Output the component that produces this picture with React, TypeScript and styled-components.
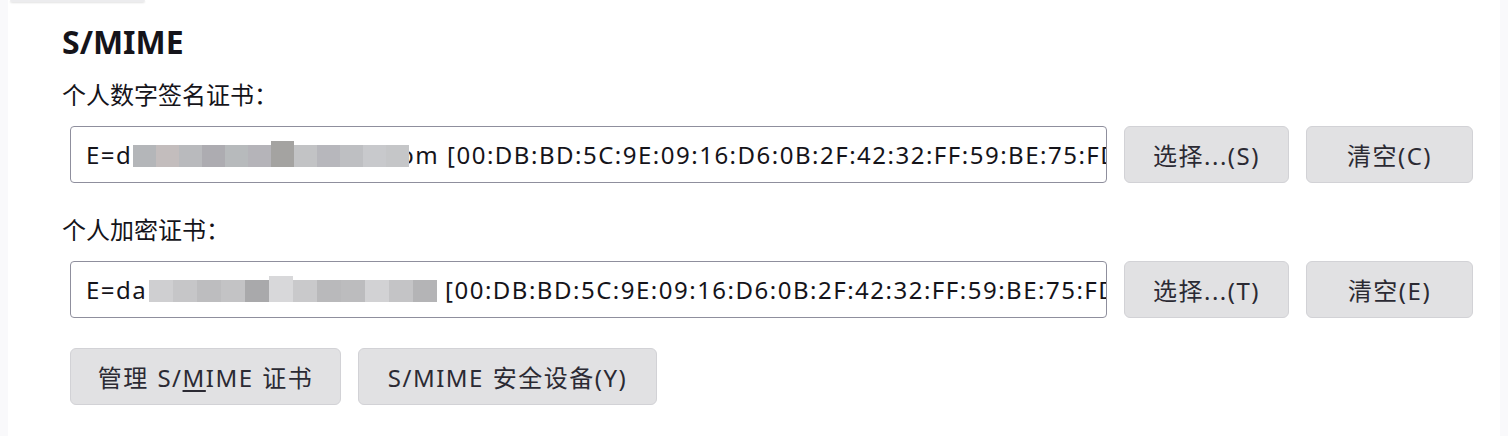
import React from 'react';
import styled, { createGlobalStyle } from 'styled-components';

const GlobalStyle = createGlobalStyle`
    html, body {
        margin: 0;
        padding: 0;
        background: #f9f9fb;
    }
    body {
        font-family: 'Noto Sans', 'Noto Sans CJK SC', sans-serif;
        color: #15141a;
    }
`;

const Page = styled.div`
    display: flex;
    height: 436px;
    padding: 0 8px;
`;

const Panel = styled.section`
    flex: 1;
    background: #ffffff;
    display: flex;
    flex-direction: column;
`;

const TopStub = styled.div`
    width: 135px;
    height: 2px;
    margin-left: 2px;
    background: #ececee;
    border-radius: 0 0 6px 6px;
    box-shadow: 0 1px 2px rgba(0, 0, 0, 0.12);
`;

const Content = styled.div`
    display: flex;
    flex-direction: column;
    padding: 20px 0 0 54px;
`;

const Heading = styled.h2`
    font-size: 32px;
    font-weight: 700;
    line-height: 40px;
    margin: 0 0 17px;
`;

const Label = styled.div`
    font-size: 24px;
    line-height: 32px;
    margin: 0 0 15px;
`;

const Row = styled.div<{ $gapBelow: number }>`
    display: flex;
    align-items: stretch;
    gap: 17px;
    margin: 0 0 ${p => p.$gapBelow}px 8px;
    height: 57px;
`;

const CertField = styled.div`
    width: 1037px;
    box-sizing: border-box;
    border: 1.5px solid #8f8f9d;
    border-radius: 4px;
    background: #ffffff;
    padding: 0 0 0 15px;
    display: flex;
    align-items: center;
    overflow: hidden;
    white-space: pre;
    font-size: 24px;
    letter-spacing: 1.5px;
    color: #15141a;
`;

// pixelated cover over the blurred e-mail address
const Mosaic = styled.span<{ $overlap: number; $lead: number }>`
    position: relative;
    z-index: 1;
    display: inline-flex;
    align-items: flex-end;
    height: 24px;
    margin: 0 ${p => -p.$overlap}px 0 ${p => p.$lead}px;
`;

const Cell = styled.span<{ $color: string; $width: number; $tall?: boolean }>`
    display: inline-block;
    width: ${p => p.$width}px;
    height: ${p => (p.$tall ? 26 : 22)}px;
    background: ${p => p.$color};
`;

const Button = styled.button<{ $width: number }>`
    width: ${p => p.$width}px;
    height: 57px;
    box-sizing: border-box;
    background: #e1e1e3;
    border: 1.5px solid #d2d2d6;
    border-radius: 6px;
    font-family: 'Noto Sans', 'Noto Sans CJK SC', sans-serif;
    font-size: 24px;
    letter-spacing: 1.5px;
    word-spacing: 1px;
    color: #2b2a33;
    padding: 0;
    cursor: pointer;
`;

const AccessKey = styled.span`
    text-decoration: underline;
    text-underline-offset: 3px;
`;

const mosaicOne = [
    '#b4b6b9',
    '#c3bdbd',
    '#b9babd',
    '#adacb1',
    '#b7babc',
    '#b5b4b9',
    '#a4a3a1',
    '#c2c3c5',
    '#b7b7bc',
    '#bebfc2',
    '#c8c9cc',
    '#c5c6c8',
];

const mosaicTwo = [
    '#cfcfd1',
    '#c6c6c8',
    '#bdbdbf',
    '#c3c3c5',
    '#a9a9ab',
    '#d8d8da',
    '#c9c9cb',
    '#b9b9bb',
    '#bcbcbe',
    '#d2d2d4',
    '#c4c4c6',
    '#b4b4b6',
];

const fingerprint = '[00:DB:BD:5C:9E:09:16:D6:0B:2F:42:32:FF:59:BE:75:FD';

interface BlurProps {
    colors: string[];
    tallAt: number;
    cell: number;
    overlap: number;
    lead: number;
}

const Blur = ({ colors, tallAt, cell, overlap, lead }: BlurProps) => (
    <Mosaic $overlap={overlap} $lead={lead}>
        {colors.map((c, i) => (
            <Cell key={i} $color={c} $width={cell} $tall={i === tallAt} />
        ))}
    </Mosaic>
);

export default function App() {
    return (
        <>
            <GlobalStyle />
            <Page>
                <Panel>
                    <TopStub />
                    <Content>
                        <Heading>S/MIME</Heading>
                        <Label>个人数字签名证书：</Label>
                        <Row $gapBelow={31}>
                            <CertField>
                                E=d
                                <Blur colors={mosaicOne} tallAt={6} cell={23} overlap={10} lead={1} />
                                {'om ' + fingerprint}
                            </CertField>
                            <Button $width={165}>选择...(S)</Button>
                            <Button $width={167}>清空(C)</Button>
                        </Row>
                        <Label>个人加密证书：</Label>
                        <Row $gapBelow={30}>
                            <CertField>
                                E=da
                                <Blur colors={mosaicTwo} tallAt={5} cell={24} overlap={0} lead={2} />
                                {' ' + fingerprint}
                            </CertField>
                            <Button $width={165}>选择...(T)</Button>
                            <Button $width={167}>清空(E)</Button>
                        </Row>
                        <Row $gapBelow={0}>
                            <Button $width={271}>
                                管理 S/<AccessKey>M</AccessKey>IME 证书
                            </Button>
                            <Button $width={299}>S/MIME 安全设备(Y)</Button>
                        </Row>
                    </Content>
                </Panel>
            </Page>
        </>
    );
}
